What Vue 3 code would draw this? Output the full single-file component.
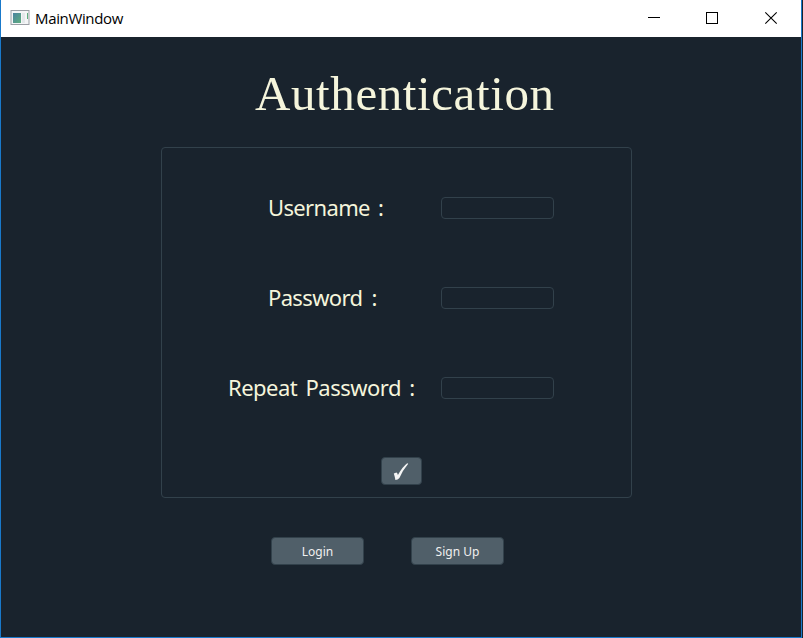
<script setup>
const fields = [
  { id: 'username', label: 'Username :', kind: 'user' },
  { id: 'password', label: 'Password :', kind: 'pass' },
  { id: 'repeat', label: 'Repeat Password :', kind: 'repeat' },
]
const actions = [
  { label: 'Login', cls: 'login' },
  { label: 'Sign Up', cls: 'signup' },
]
</script>

<template>
  <div class="window">
    <header class="titlebar">
      <svg class="app-icon" width="20" height="16" viewBox="0 0 20 16">
        <defs>
          <linearGradient id="pane" x1="0" y1="0" x2="1" y2="1">
            <stop offset="0" stop-color="#4b83a0" />
            <stop offset="1" stop-color="#5fae7e" />
          </linearGradient>
        </defs>
        <rect x="1" y="0.5" width="18" height="14" fill="#f4f5f6" stroke="#9b9fa5" />
        <rect x="3" y="3" width="8" height="10" fill="url(#pane)" />
        <rect x="12" y="3" width="3" height="10" fill="#e4e8ea" />
        <rect x="17" y="3" width="1" height="6" fill="#5fae7e" />
      </svg>
      <span class="caption">MainWindow</span>
      <svg class="controls" width="130" height="14" viewBox="0 0 130 14" fill="none" stroke="#000">
        <path d="M0 6.5H12" />
        <rect x="58.5" y="1.5" width="11" height="11" />
        <path d="M117.3 1.3L128.7 12.7M128.7 1.3L117.3 12.7" stroke-width="1.1" />
      </svg>
    </header>
    <main class="content">
      <h1>Authentication</h1>
      <form class="panel" @submit.prevent>
        <div v-for="f in fields" :key="f.id" class="row">
          <label :for="f.id" :class="f.kind">{{ f.label }}</label>
          <input :id="f.id" :type="f.kind === 'user' ? 'text' : 'password'" />
        </div>
        <button class="confirm" type="submit" aria-label="Confirm">
          <svg width="16" height="18" viewBox="0 0 16 18">
            <path d="M0.8 10.5L3.4 9.6Q4.4 10 4.9 12Q9 4.2 14.2 0.2L15.2 0.8Q9.8 7.2 6.4 15Q4.8 17 2.4 17Q1.8 13.5 0.8 10.5Z" fill="#f5f5f5" />
          </svg>
        </button>
      </form>
      <div class="actions">
        <button v-for="a in actions" :key="a.label" :class="a.cls"><span>{{ a.label }}</span></button>
      </div>
    </main>
  </div>
</template>

<style>
body {
  margin: 0;
  background: #19232d;
}
</style>

<style scoped>
.window {
  box-sizing: border-box;
  width: 802px;
  height: 638px;
  border: 1px solid #1979ca;
  border-top: 0;
  background: #19232d;
  overflow: hidden;
}
.titlebar {
  display: flex;
  align-items: center;
  box-sizing: border-box;
  height: 37px;
  padding: 0 23px 0 9px;
  background: #fff;
}
.app-icon {
  flex: none;
  margin-bottom: 1px;
}
.caption {
  margin-left: 5px;
  padding-bottom: 2px;
  font: 15px/20px "Open Sans", "Noto Sans", sans-serif;
  letter-spacing: -0.35px;
  color: #000;
}
.controls {
  flex: none;
  margin: 0 0 2px auto;
}
.content {
  display: flex;
  flex-direction: column;
}
h1 {
  margin: 27px 0 0 254px;
  height: 61px;
  font: 400 49px/60px "Liberation Serif", serif;
  letter-spacing: 0.6px;
  color: #f5f5dc;
  white-space: nowrap;
}
.panel {
  box-sizing: border-box;
  display: flex;
  flex-direction: column;
  width: 471px;
  height: 351px;
  margin: 22px 0 0 160px;
  padding-top: 45px;
  border: 1px solid #32414b;
  border-radius: 4px;
}
.row {
  display: flex;
  align-items: center;
  height: 30px;
  margin-bottom: 60px;
}
label {
  box-sizing: border-box;
  width: 279px;
  padding: 0 0 1px 106px;
  font: 22px/29px "Noto Sans", sans-serif;
  letter-spacing: -0.65px;
  word-spacing: 3px;
  color: #f5f5dc;
  white-space: nowrap;
}
.pass {
  word-spacing: 4px;
}
.repeat {
  padding-left: 66px;
  letter-spacing: -0.5px;
  word-spacing: 3px;
}
input {
  box-sizing: border-box;
  width: 113px;
  height: 22px;
  margin: 0;
  padding: 0 4px;
  border: 1px solid #32414b;
  border-radius: 4px;
  background: #19232d;
  color: #f0f0f0;
  outline: none;
}
button {
  box-sizing: border-box;
  display: flex;
  align-items: center;
  justify-content: center;
  height: 28px;
  padding: 0;
  border: 1px solid #32414b;
  border-radius: 4px;
  background: #505f69;
  color: #f0f0f0;
  font: 12px/16px "Noto Sans", sans-serif;
}
.confirm {
  width: 41px;
  margin: -6px 0 0 219px;
}
.confirm svg {
  margin: 2px 2px 0 0;
}
.actions {
  display: flex;
  gap: 47px;
  margin: 39px 0 0 270px;
}
.actions button {
  width: 93px;
  padding-top: 2px;
}
</style>
